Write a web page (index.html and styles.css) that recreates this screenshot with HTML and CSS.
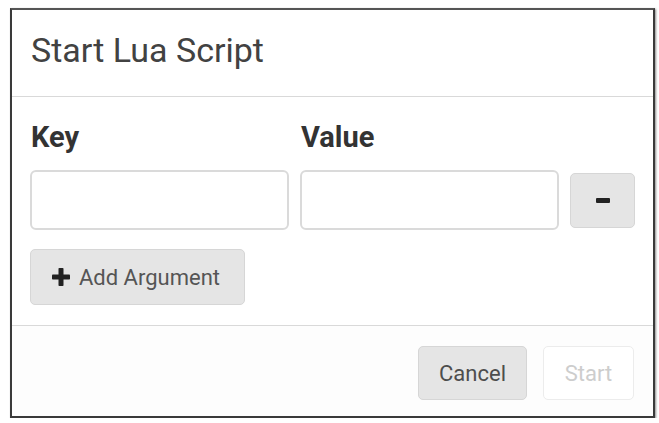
FILE: index.html
```html
<!DOCTYPE html>
<html lang="en">
<head>
<meta charset="utf-8">
<title>Start Lua Script</title>
<link rel="stylesheet" href="styles.css">
</head>
<body>
<div class="dialog">
  <div class="dialog-header">
    <h1 class="dialog-title">Start Lua Script</h1>
  </div>
  <div class="dialog-body">
    <div class="arg-grid">
      <label class="arg-label">Key</label>
      <label class="arg-label">Value</label>
      <span></span>
      <input class="arg-input" type="text">
      <input class="arg-input" type="text">
      <button class="btn btn-remove" type="button"><span class="minus"></span></button>
    </div>
    <button class="btn btn-add" type="button">
      <svg class="plus" width="18" height="18" viewBox="0 0 18 18" aria-hidden="true">
        <rect x="6.5" y="0" width="5" height="18" rx="0.8" fill="#222"/>
        <rect x="0" y="6.5" width="18" height="5" rx="0.8" fill="#222"/>
      </svg>
      <span>Add Argument</span>
    </button>
  </div>
  <div class="dialog-footer">
    <button class="btn btn-cancel" type="button">Cancel</button>
    <button class="btn btn-start" type="button" disabled>Start</button>
  </div>
</div>
</body>
</html>
```

FILE: styles.css
```css
html, body {
  margin: 0;
  padding: 0;
  background: #ffffff;
}

body {
  font-family: Roboto, "Liberation Sans", Arial, sans-serif;
  color: #3a3a3a;
}

.dialog {
  box-sizing: border-box;
  margin: 8px 0 0 10px;
  width: 645px;
  height: 410px;
  border: 2px solid #3a3a3a;
  border-top-color: #555;
  box-shadow: 1px 1px 2px rgba(0, 0, 0, 0.45);
  background: #ffffff;
  display: flex;
  flex-direction: column;
}

.dialog-header {
  box-sizing: border-box;
  height: 87px;
  padding: 20px 19px 0;
  border-bottom: 1px solid #d9d9d9;
}

.dialog-title {
  margin: 0;
  font-size: 34px;
  line-height: 40px;
  font-weight: 400;
  color: #424242;
}

.dialog-body {
  box-sizing: border-box;
  height: 229px;
  padding: 24px 18px 0;
  border-bottom: 1px solid #d9d9d9;
}

.arg-grid {
  display: grid;
  grid-template-columns: 259px 259px 65px;
  column-gap: 11px;
  row-gap: 16px;
  align-items: center;
}

.arg-label {
  font-size: 29px;
  line-height: 33px;
  font-weight: 700;
  color: #333;
  padding-left: 1px;
}

.arg-input {
  box-sizing: border-box;
  height: 60px;
  width: 100%;
  margin: 0;
  border: 2px solid #dadada;
  border-radius: 6px;
  background: #fff;
  font: inherit;
  outline: none;
}

.btn {
  box-sizing: border-box;
  margin: 0;
  font-family: Roboto, "Liberation Sans", Arial, sans-serif;
  font-size: 22px;
  color: #4d4d4d;
  background: #e5e5e5;
  border: 1px solid #d6d6d6;
  border-radius: 5px;
  cursor: pointer;
}

.btn-remove {
  height: 55px;
  width: 65px;
  display: flex;
  align-items: center;
  justify-content: center;
  padding: 0;
}

.minus {
  display: block;
  width: 14px;
  height: 5px;
  border-radius: 1px;
  background: #222;
}

.btn-add {
  margin-top: 19px;
  height: 56px;
  width: 215px;
  display: flex;
  align-items: center;
  gap: 9px;
  padding: 0 0 0 21px;
  color: #555;
}

.plus {
  display: block;
  flex: none;
}

.dialog-footer {
  flex: 1;
  display: flex;
  justify-content: flex-end;
  align-items: flex-start;
  gap: 16px;
  padding: 20px 19px 0 0;
  background: #fdfdfd;
}

.btn-cancel {
  height: 54px;
  width: 109px;
  padding: 0;
}

.btn-start {
  height: 54px;
  width: 91px;
  padding: 0;
  background: #ffffff;
  border: 1px solid #ececec;
  color: #cdcdcd;
  cursor: default;
}
```
